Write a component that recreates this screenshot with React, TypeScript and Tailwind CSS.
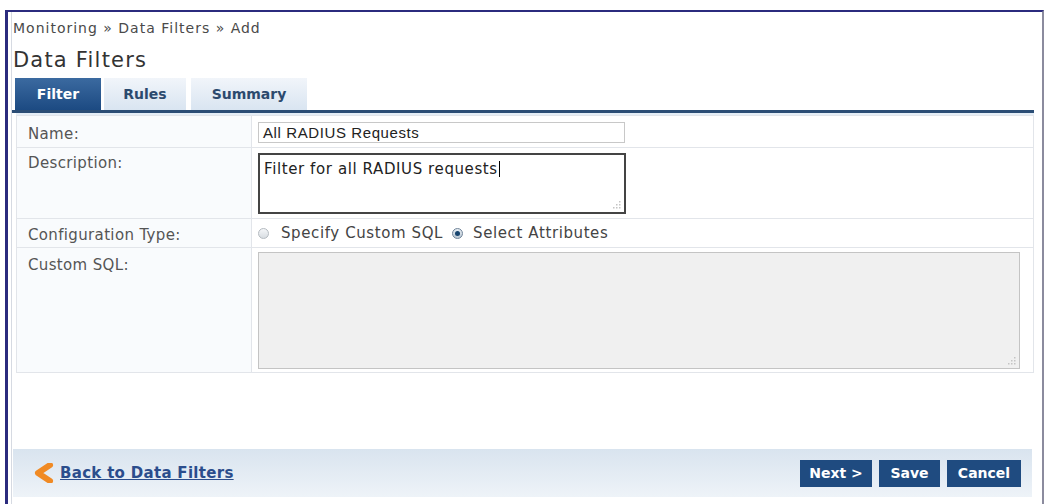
const rowLabel = "border-r border-[#e2e5ea] bg-[#f9fbfd] px-[11px] text-[15px] leading-[18px] tracking-[0.35px] text-[#555]";

function Tabs() {
  return (
    <div className="flex items-end gap-[3px] border-b-[3px] border-[#2b4d75] pl-[3px]">
      <div className="flex h-[32px] w-[86px] items-center justify-center bg-gradient-to-b from-[#3b6aa0] to-[#1c4a82] text-[14px] font-bold text-white">
        Filter
      </div>
      <div className="flex h-[32px] w-[82px] items-center justify-center bg-gradient-to-b from-[#f1f5fa] to-[#d9e5f1] text-[14px] font-bold text-[#2c4a6e]">
        Rules
      </div>
      <div className="ml-[2px] flex h-[32px] w-[116px] items-center justify-center bg-gradient-to-b from-[#f1f5fa] to-[#d9e5f1] text-[14px] font-bold text-[#2c4a6e]">
        Summary
      </div>
    </div>
  );
}

function Radio({ checked, className = "" }: { checked?: boolean; className?: string }) {
  return (
    <span
      className={`flex h-[11px] w-[11px] shrink-0 items-center justify-center rounded-full border ${
        checked ? "border-[#6f8398] bg-gradient-to-b from-[#e6edf3] to-[#b9c6d2]" : "border-[#b4bac0] bg-gradient-to-b from-[#f4f6f8] to-[#d8dde2]"
      } ${className}`}
    >
      {checked && <span className="h-[5px] w-[5px] rounded-full bg-[#17446e]" />}
    </span>
  );
}

function Grip() {
  return (
    <svg width="8" height="8" viewBox="0 0 8 8" className="absolute bottom-[3px] right-[3px]">
      <rect x="6" y="0" width="1.5" height="1.5" fill="#c4c4c4" />
      <rect x="3" y="3" width="1.5" height="1.5" fill="#c4c4c4" />
      <rect x="6" y="3" width="1.5" height="1.5" fill="#c4c4c4" />
      <rect x="0" y="6" width="1.5" height="1.5" fill="#c4c4c4" />
      <rect x="3" y="6" width="1.5" height="1.5" fill="#c4c4c4" />
      <rect x="6" y="6" width="1.5" height="1.5" fill="#c4c4c4" />
    </svg>
  );
}

export default function App() {
  return (
    <div className="h-[504px] w-[1048px] overflow-hidden bg-white pl-[5px] pt-[10px] font-['DejaVu_Sans',sans-serif]">
      <div className="h-[494px] w-[1039px] border-l-[3px] border-r-2 border-t-2 border-l-[#2b2b7e] border-r-[#8b8b9e] border-t-[#2b2b7e] pl-[3px]">
        <div className="h-full w-[1023px] border-l border-[#d6dae2]">
          <div className="pl-[1px] pt-[7px] text-[14px] leading-[18px] tracking-[1px] text-[#4a4a4a]">
            Monitoring » Data Filters » Add
          </div>
          <h1 className="mt-[10px] pl-[1px] text-[21px] leading-[26px] tracking-[1.2px] text-[#333]">Data Filters</h1>
          <div className="mt-[5px]">
            <Tabs />
          </div>

          <div className="ml-[4px] border-t-[2px] border-[#e4edf6]">
            <div className="border border-[#e2e5ea]">
              <div className="grid grid-cols-[235px_1fr] border-b border-[#e2e5ea]">
                <div className={`${rowLabel} h-[31px] pt-[9px]`}>Name:</div>
                <div className="px-[6px] pt-[6px]">
                  <div className="h-[21px] w-[367px] border border-[#c8c8c8] px-[4px] font-['Liberation_Sans',sans-serif] text-[15px] leading-[19px] tracking-[0.6px] text-[#222]">
                    All RADIUS Requests
                  </div>
                </div>
              </div>

              <div className="grid grid-cols-[235px_1fr] border-b border-[#e2e5ea]">
                <div className={`${rowLabel} pt-[6px]`}>Description:</div>
                <div className="px-[6px] pb-[4px] pt-[5px]">
                  <div className="relative h-[61px] w-[368px] border-2 border-[#444] px-[4px] pt-[3px] text-[15px] leading-[18px] tracking-[0.6px] text-[#222]">
                    Filter for all RADIUS requests<span className="ml-px inline-block h-[16px] w-px translate-y-[3px] bg-black" />
                    <Grip />
                  </div>
                </div>
              </div>

              <div className="grid grid-cols-[235px_1fr] border-b border-[#e2e5ea]">
                <div className={`${rowLabel} h-[28px] pt-[7px]`}>Configuration Type:</div>
                <div className="flex items-center px-[6px] text-[15px] tracking-[0.6px] text-[#444]">
                  <Radio />
                  <span className="ml-[12px]">Specify Custom SQL</span>
                  <Radio checked className="ml-[9px]" />
                  <span className="ml-[10px]">Select Attributes</span>
                </div>
              </div>

              <div className="grid grid-cols-[235px_1fr]">
                <div className={`${rowLabel} pt-[8px]`}>Custom SQL:</div>
                <div className="px-[6px] pb-[3px] pt-[4px]">
                  <div className="relative h-[117px] w-[762px] border border-[#c4c4c4] bg-[#f0f0f0]">
                    <Grip />
                  </div>
                </div>
              </div>
            </div>
          </div>

          <div className="ml-[1px] mr-[2px] mt-[76px] flex h-[48px] items-center justify-between bg-gradient-to-b from-[#d9e4ef] to-[#eef3f8] pl-[19px] pr-[11px]">
            <a href="#" className="flex items-center gap-[6px] text-[15px] font-bold tracking-[0.3px] text-[#2b4d8c] underline">
              <svg width="22" height="20" viewBox="0 0 22 20">
                <path d="M18 2 L6 10 L18 18" fill="none" stroke="#f08a24" strokeWidth="6" strokeLinejoin="round" strokeLinecap="round" />
              </svg>
              Back to Data Filters
            </a>
            <div className="flex gap-[7px]">
              <button className="h-[27px] w-[72px] bg-[#1f4b80] text-[14px] font-bold text-white">Next &gt;</button>
              <button className="h-[27px] w-[61px] bg-[#1f4b80] text-[14px] font-bold text-white">Save</button>
              <button className="h-[27px] w-[74px] bg-[#1f4b80] text-[14px] font-bold text-white">Cancel</button>
            </div>
          </div>
        </div>
      </div>
    </div>
  );
}
